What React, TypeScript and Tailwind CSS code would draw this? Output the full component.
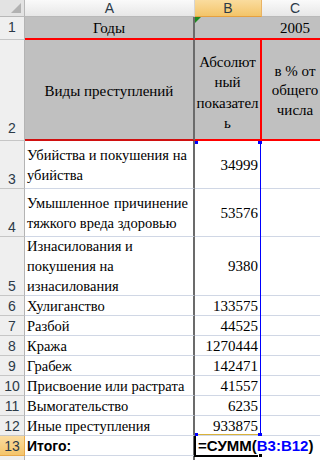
import React from "react";

const rowHdr =
  "flex items-end justify-center pb-[1px] bg-[#efefef] border-b border-r border-b-[#c6c6c6] border-r-[#b4b4b4] text-[14px] leading-[16px] text-[#2c3a48] font-['Liberation_Sans',sans-serif]";
const rowHdrSel =
  "flex items-end justify-center pb-[1px] bg-gradient-to-b from-[#fbdc9f] to-[#f4c46a] border-b border-r border-b-[#e8a94a] border-r-[#e8a94a] text-[14px] leading-[16px] text-[#2c3a48] font-['Liberation_Sans',sans-serif]";
const cellA =
  "flex flex-col justify-center pl-[2px] border-b border-b-[#d0d7e5] border-r-2 border-r-[#6b6b6b] overflow-hidden whitespace-nowrap";
const cellB =
  "flex items-center justify-end pr-[4px] text-[15px] border-b border-b-[#d0d7e5] overflow-hidden whitespace-nowrap";
const cellC = "border-b border-b-[#d0d7e5]";

type Row = { n: number; a: React.ReactNode; b: string };

const rows: Row[] = [
  {
    n: 3,
    a: (
      <>
        <div>Убийства и покушения на</div>
        <div>убийства</div>
      </>
    ),
    b: "34999",
  },
  {
    n: 4,
    a: (
      <>
        <div className="flex justify-between w-[161px]">
          <span>Умышленное</span>
          <span>причинение</span>
        </div>
        <div>тяжкого вреда здоровью</div>
      </>
    ),
    b: "53576",
  },
  {
    n: 5,
    a: (
      <>
        <div>Изнасилования и</div>
        <div>покушения на</div>
        <div>изнасилования</div>
      </>
    ),
    b: "9380",
  },
  { n: 6, a: "Хулиганство", b: "133575" },
  { n: 7, a: "Разбой", b: "44525" },
  { n: 8, a: "Кража", b: "1270444" },
  { n: 9, a: "Грабеж", b: "142471" },
  { n: 10, a: "Присвоение или растрата", b: "41557" },
  { n: 11, a: "Вымогательство", b: "6235" },
  { n: 12, a: "Иные преступления", b: "933875" },
];

export default function App() {
  return (
    <div className="relative w-[320px] h-[460px] overflow-hidden bg-white">
      <div className="grid w-[328px] grid-cols-[25px_170px_67px_66px] grid-rows-[17px_23px_101px_48px_48px_59px_20px_20px_20px_20px_20px_20px_20px_20px_20px] font-['Liberation_Serif',serif] text-[14.5px] leading-[20px] text-black">
        {/* column headers */}
        <div className="relative bg-[#e3e3e3] border-b border-r border-[#b8b8b8]">
          <svg className="absolute right-[3px] bottom-[3px]" width="10" height="10" viewBox="0 0 10 10">
            <polygon points="10,0 10,10 0,10" fill="#b2b2b2" />
          </svg>
        </div>
        <div className="flex items-center justify-center bg-gradient-to-b from-[#fafafa] to-[#e7e7e7] border-b border-r border-b-[#b9b9b9] border-r-[#d5d5d5] text-[14px] text-[#2c3a48] font-['Liberation_Sans',sans-serif]">
          A
        </div>
        <div className="flex items-center justify-center bg-gradient-to-b from-[#fadc9e] to-[#f3c468] border-b border-r border-b-[#e5a040] border-r-[#e9b364] text-[14px] text-[#2c3a48] font-['Liberation_Sans',sans-serif]">
          B
        </div>
        <div className="flex items-center justify-center bg-gradient-to-b from-[#fafafa] to-[#e7e7e7] border-b border-b-[#b9b9b9] text-[14px] text-[#2c3a48] font-['Liberation_Sans',sans-serif]">
          C
        </div>

        {/* row 1 */}
        <div className={rowHdr + " pb-[4px]"}>1</div>
        <div className="flex items-center justify-center pt-[1px] text-[15px] bg-[#c0c0c0] border-b-2 border-b-[#ff0000] border-r-2 border-r-[#6b6b6b]">
          Годы
        </div>
        <div className="relative bg-[#c0c0c0] border-b-2 border-b-[#ff0000]">
          <svg className="absolute left-0 top-0" width="6" height="6" viewBox="0 0 6 6">
            <polygon points="0,0 6,0 0,6" fill="#1f8a1f" />
          </svg>
        </div>
        <div className="flex items-center justify-center pt-[1px] text-[15px] bg-[#c0c0c0] border-b-2 border-b-[#ff0000]">
          2005
        </div>

        {/* row 2 */}
        <div className={rowHdr + " pb-[4px]"}>2</div>
        <div className="flex items-center justify-center pt-[2px] text-[15px] bg-[#c0c0c0] border-b-2 border-b-[#d01010] border-r-2 border-r-[#6b6b6b]">
          Виды преступлений
        </div>
        <div className="flex flex-col items-center justify-center pt-[6px] text-[15px] leading-[20.5px] bg-[#c0c0c0] border-b-2 border-b-[#ff0000] border-r-2 border-r-[#ff0000]">
          <div>Абсолют</div>
          <div>ный</div>
          <div>показател</div>
          <div>ь</div>
        </div>
        <div className="flex flex-col items-center justify-center pt-[3px] text-[15px] leading-[19.5px] bg-[#c0c0c0] border-b-2 border-b-[#ff0000]">
          <div>в % от</div>
          <div>общего</div>
          <div>числа</div>
        </div>

        {rows.map((r) => (
          <React.Fragment key={r.n}>
            <div className={rowHdr}>{r.n}</div>
            <div className={cellA}>{r.a}</div>
            <div className={cellB}>{r.b}</div>
            <div className={cellC} />
          </React.Fragment>
        ))}

        {/* row 13 */}
        <div className={rowHdrSel}>13</div>
        <div className="flex items-center pl-[2px] border-b border-b-[#d0d7e5] border-r-2 border-r-[#6b6b6b] font-['Liberation_Sans',sans-serif] font-bold text-[14px]">
          Итого:
        </div>
        <div className="flex items-center pl-[3px] whitespace-nowrap overflow-visible border-b border-b-[#d0d7e5] font-['Liberation_Sans',sans-serif] font-bold text-[15px]">
          <span>=СУМ</span>
          <span className="inline-block w-[1px] h-[19px] bg-black" />
          <span>М(</span>
          <span className="text-[#0000ff]">B3:B12</span>
          <span>)</span>
        </div>
        <div />

        {/* row 14 */}
        <div className="bg-[#efefef] border-r border-r-[#b4b4b4]" />
        <div className="border-r-2 border-r-[#6b6b6b]" />
        <div />
        <div />
      </div>

      {/* formula range highlight B3:B12 */}
      <div className="absolute left-[260px] top-[141px] w-[1px] h-[294px] bg-[#0000ff]" />
      <div className="absolute left-[197px] top-[434px] w-[62px] h-[1px] bg-[#d9b23a]" />
      <div className="absolute left-[195px] top-[141px] w-[3px] h-[3px] bg-[#0000ff]" />
      <div className="absolute left-[258px] top-[141px] w-[4px] h-[3px] bg-[#0000ff]" />
      <div className="absolute left-[195px] top-[433px] w-[3px] h-[3px] bg-[#0000ff]" />
      <div className="absolute left-[258px] top-[433px] w-[4px] h-[3px] bg-[#0000ff]" />

      {/* active cell B13 */}
      <div className="absolute left-[194px] top-[436px] w-[2px] h-[21px] bg-black" />
      <div className="absolute left-[194px] top-[455px] w-[68px] h-[2px] bg-black" />
      <div className="absolute left-[258px] top-[453px] w-[5px] h-[5px] bg-black border border-white" />
    </div>
  );
}
